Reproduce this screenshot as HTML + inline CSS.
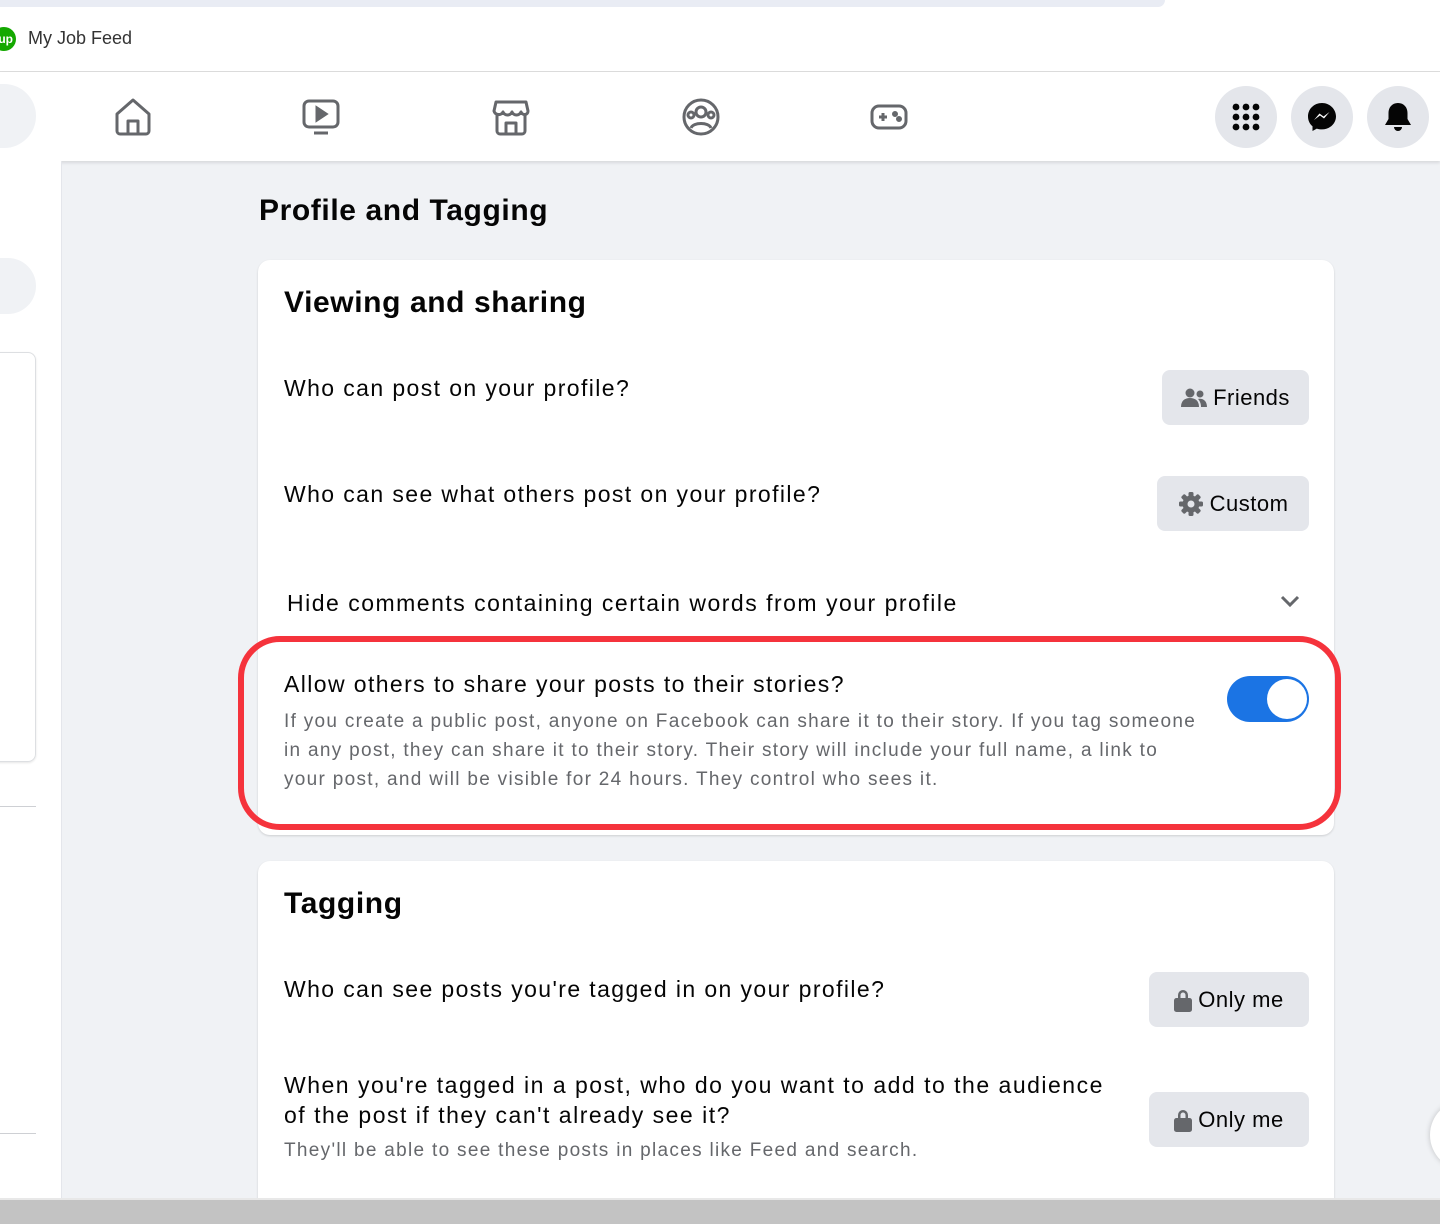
<!DOCTYPE html>
<html><head><meta charset="utf-8"><style>
*{margin:0;padding:0;box-sizing:border-box}
body{width:1440px;height:1224px;position:relative;overflow:hidden;background:#f0f2f5;font-family:"Liberation Sans",sans-serif;color:#050505}
.a{position:absolute}
.t{position:absolute;white-space:nowrap;line-height:1}
.q{letter-spacing:1.4px}
.h{letter-spacing:0.6px}
.btn{position:absolute;background:#e4e6eb;border-radius:8px;display:flex;align-items:center;justify-content:center;font-size:22px;gap:6px;color:#050505;letter-spacing:0.5px}
.circ{position:absolute;width:62px;height:62px;border-radius:50%;background:#e4e6eb;display:flex;align-items:center;justify-content:center}
</style></head><body>
<div class="a" style="left:0;top:0;width:1440px;height:72px;background:#fff"></div>
<div class="a" style="left:0;top:0;width:1165px;height:7px;background:#e9ecf4;border-radius:0 0 8px 0"></div>
<div class="a" style="left:-8px;top:27px;width:24px;height:24px;border-radius:50%;background:#14a800;color:#fff;font-size:12px;font-weight:bold;line-height:24px;text-align:right;padding-right:3px">up</div>
<div class="t" style="left:28px;top:29px;font-size:18px;color:#333">My Job Feed</div>
<div class="a" style="left:0;top:71px;width:1440px;height:1px;background:#dcdcdc"></div>
<div class="a" style="left:0;top:72px;width:1440px;height:89px;background:#fff;box-shadow:0 2px 3px rgba(0,0,0,.1)"></div>
<div class="a" style="left:-30px;top:84px;width:66px;height:64px;border-radius:32px;background:#f0f2f5"></div>
<svg class="a" style="left:113px;top:97px" width="40" height="40" viewBox="0 0 40 40" fill="none" stroke="#65676b" stroke-width="3" stroke-linejoin="round"><path d="M4 17 L20 3 L36 17 V34 a3 3 0 0 1 -3 3 H7 a3 3 0 0 1 -3 -3 Z"/><path d="M15 37 V24 h10 V37"/></svg>
<svg class="a" style="left:301px;top:97px" width="40" height="40" viewBox="0 0 40 40" fill="none" stroke="#65676b" stroke-width="3"><rect x="3" y="4" width="34" height="26" rx="5"/><path d="M16 11 L25 17 L16 23 Z" fill="#65676b"/><path d="M13 36 H27"/></svg>
<svg class="a" style="left:491px;top:97px" width="40" height="40" viewBox="0 0 40 40" fill="none" stroke="#65676b" stroke-width="3" stroke-linejoin="round"><path d="M5 5 H35 L37 14 c0 4 -5 5 -7 1 c-2 4 -7 4 -9 0 c-2 4 -7 4 -9 0 c-2 4 -8 3 -9 -1 Z"/><path d="M6 17 V34 a3 3 0 0 0 3 3 H31 a3 3 0 0 0 3 -3 V17"/><path d="M15 37 V26 h10 V37"/></svg>
<svg class="a" style="left:681px;top:97px" width="40" height="40" viewBox="0 0 40 40" fill="none" stroke="#65676b" stroke-width="3"><circle cx="20" cy="20" r="17"/><circle cx="20" cy="15" r="5"/><circle cx="10" cy="18" r="3"/><circle cx="30" cy="18" r="3"/><path d="M10 31 c2 -6 18 -6 20 0"/></svg>
<svg class="a" style="left:869px;top:97px" width="40" height="40" viewBox="0 0 40 40" fill="none" stroke="#65676b" stroke-width="3"><rect x="3" y="9" width="34" height="22" rx="7"/><path d="M10 20 H18 M14 16 V24"/><circle cx="26" cy="17" r="1.5" fill="#65676b"/><circle cx="30" cy="22" r="1.5" fill="#65676b"/></svg>
<div class="circ" style="left:1215px;top:86px"><svg width="32" height="32" viewBox="0 0 32 32" fill="#050505"><circle cx="6" cy="6" r="3.4"/><circle cx="16" cy="6" r="3.4"/><circle cx="26" cy="6" r="3.4"/><circle cx="6" cy="16" r="3.4"/><circle cx="16" cy="16" r="3.4"/><circle cx="26" cy="16" r="3.4"/><circle cx="6" cy="26" r="3.4"/><circle cx="16" cy="26" r="3.4"/><circle cx="26" cy="26" r="3.4"/></svg></div>
<div class="circ" style="left:1291px;top:86px"><svg width="32" height="32" viewBox="0 0 32 32"><path d="M16 2 C8 2 2 8 2 15.5 c0 4 1.7 7.5 4.5 9.8 V30 l4.3 -2.4 c1.6 .5 3.4 .8 5.2 .8 c8 0 14 -6 14 -13 S24 2 16 2 Z" fill="#050505"/><path d="M8 19 L13.5 12.5 L17.5 15.5 L23.5 11 L18 17.5 L14 14.5 Z" fill="#fff"/></svg></div>
<div class="circ" style="left:1367px;top:86px"><svg width="32" height="32" viewBox="0 0 32 32" fill="#050505"><path d="M16 2 c-6 0 -9.5 4.5 -9.5 10 v6 L3 24 h26 L25.5 18 v-6 C25.5 6.5 22 2 16 2 Z"/><path d="M12 26 a4 4 0 0 0 8 0 Z"/></svg></div>
<div class="a" style="left:0;top:161px;width:62px;height:1040px;background:#fff;border-right:1px solid #e4e6eb"></div>
<div class="a" style="left:-30px;top:258px;width:66px;height:56px;border-radius:28px;background:#f0f2f5"></div>
<div class="a" style="left:-20px;top:352px;width:56px;height:410px;border-radius:8px;border:1px solid #dddfe2;box-shadow:0 1px 2px rgba(0,0,0,.1)"></div>
<div class="a" style="left:0;top:806px;width:36px;height:1px;background:#ced0d4"></div>
<div class="a" style="left:0;top:1133px;width:36px;height:1px;background:#ced0d4"></div>
<div class="t h" style="left:259px;top:196px;font-size:30px;font-weight:bold">Profile and Tagging</div>
<div class="a" style="left:258px;top:260px;width:1076px;height:575px;background:#fff;border-radius:12px;box-shadow:0 1px 2px rgba(0,0,0,.15)"></div>
<div class="t h" style="left:284px;top:288px;font-size:30px;font-weight:bold">Viewing and sharing</div>
<div class="t q" style="left:284px;top:377px;font-size:23px">Who can post on your profile?</div>
<div class="btn" style="left:1162px;top:370px;width:147px;height:55px"><svg width="26" height="20" viewBox="0 0 26 20" fill="#65676b"><circle cx="9" cy="5" r="4.5"/><path d="M0 19 c0 -6 3.5 -9 9 -9 s9 3 9 9 Z"/><circle cx="19" cy="6" r="3.5"/><path d="M17 11 c5 -1 9 2 9 8 h-6 c0 -3 -1 -6 -3 -8 Z"/></svg>Friends</div>
<div class="t q" style="left:284px;top:483px;font-size:23px">Who can see what others post on your profile?</div>
<div class="btn" style="left:1157px;top:476px;width:152px;height:55px"><svg width="26" height="26" viewBox="0 0 26 26"><g fill="#65676b"><circle cx="13" cy="13" r="8.5"/><rect x="10.5" y="1" width="5" height="24" rx="1.5"/><rect x="10.5" y="1" width="5" height="24" rx="1.5" transform="rotate(45 13 13)"/><rect x="10.5" y="1" width="5" height="24" rx="1.5" transform="rotate(90 13 13)"/><rect x="10.5" y="1" width="5" height="24" rx="1.5" transform="rotate(135 13 13)"/></g><circle cx="13" cy="13" r="3.5" fill="#e4e6eb"/></svg>Custom</div>
<div class="t q" style="left:287px;top:592px;font-size:23px;letter-spacing:1.5px">Hide comments containing certain words from your profile</div>
<svg class="a" style="left:1280px;top:594px" width="20" height="14" viewBox="0 0 20 14" fill="none" stroke="#65676b" stroke-width="3"><path d="M2 3 L10 11 L18 3"/></svg>
<div class="t q" style="left:284px;top:673px;font-size:23px">Allow others to share your posts to their stories?</div>
<div class="a" style="left:284px;top:707px;width:940px;font-size:19px;line-height:29px;color:#65676b;letter-spacing:1.3px;white-space:nowrap">If you create a public post, anyone on Facebook can share it to their story. If you tag someone<br>in any post, they can share it to their story. Their story will include your full name, a link to<br>your post, and will be visible for 24 hours. They control who sees it.</div>
<div class="a" style="left:1227px;top:676px;width:82px;height:46px;border-radius:23px;background:#1b74e4"></div>
<div class="a" style="left:1267px;top:679px;width:40px;height:40px;border-radius:50%;background:#fff"></div>
<div class="a" style="left:238px;top:636px;width:1103px;height:194px;border:6px solid #f5333c;border-radius:42px"></div>
<div class="a" style="left:258px;top:861px;width:1076px;height:360px;background:#fff;border-radius:12px;box-shadow:0 1px 2px rgba(0,0,0,.15)"></div>
<div class="t h" style="left:284px;top:889px;font-size:30px;font-weight:bold">Tagging</div>
<div class="t q" style="left:284px;top:978px;font-size:23px">Who can see posts you're tagged in on your profile?</div>
<div class="btn" style="left:1149px;top:972px;width:160px;height:55px"><svg width="18" height="24" viewBox="0 0 18 24" fill="#65676b"><path d="M4 10 V7 a5 5 0 0 1 10 0 V10 h-2.5 V7 a2.5 2.5 0 0 0 -5 0 V10 Z"/><rect x="0" y="10" width="18" height="14" rx="2.5"/></svg>Only me</div>
<div class="a q" style="left:284px;top:1070px;font-size:23px;line-height:30px;white-space:nowrap;letter-spacing:1.5px">When you're tagged in a post, who do you want to add to the audience<br>of the post if they can't already see it?</div>
<div class="t" style="left:284px;top:1141px;font-size:19px;color:#65676b;letter-spacing:1.3px">They'll be able to see these posts in places like Feed and search.</div>
<div class="btn" style="left:1149px;top:1092px;width:160px;height:55px"><svg width="18" height="24" viewBox="0 0 18 24" fill="#65676b"><path d="M4 10 V7 a5 5 0 0 1 10 0 V10 h-2.5 V7 a2.5 2.5 0 0 0 -5 0 V10 Z"/><rect x="0" y="10" width="18" height="14" rx="2.5"/></svg>Only me</div>
<div class="a" style="left:1430px;top:1100px;width:70px;height:70px;border-radius:50%;background:#fff;box-shadow:0 0 6px rgba(0,0,0,.2)"></div>
<div class="a" style="left:0;top:1198px;width:1440px;height:26px;background:#c3c3c3;border-top:2px solid #e8e8e8"></div>
</body></html>
